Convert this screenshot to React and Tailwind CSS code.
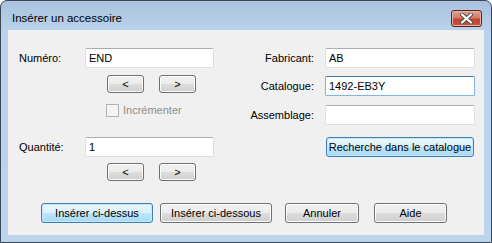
import React from 'react';

const font = "font-['Liberation_Sans',Arial,sans-serif]";

function Input({ value, focused, className = '' }) {
  const border = focused
    ? 'border-[#7eb4ea] border-t-[#3d7bad]'
    : 'border-[#dbdfe6] border-t-[#abadb3]';
  return (
    <div className={`h-[20px] bg-white border rounded-[2px] flex items-center pl-[3px] text-[11px] text-black ${border} ${className}`}>
      {value}
    </div>
  );
}

function Btn({ children, primary, className = '' }) {
  const look = primary
    ? 'border-[#3c7fb1] bg-[linear-gradient(#eaf6fd,#d9f0fc_50%,#bee6fd_50%,#a7d9f5)] shadow-[inset_0_0_0_1px_#c6e7fa]'
    : 'border-[#707070] bg-[linear-gradient(#f2f2f2,#ebebeb_50%,#dddddd_50%,#cfcfcf)] shadow-[inset_0_0_0_1px_#fcfcfc]';
  return (
    <div className={`border rounded-[3px] flex items-center justify-center text-[11px] text-black ${look} ${className}`}>
      {children}
    </div>
  );
}

export default function App() {
  return (
    <div className={`w-[492px] h-[243px] ${font}`}>
      <div className="w-full h-full flex flex-col border border-[#3b4756] rounded-t-[7px] bg-[linear-gradient(#a9c2de,#bad2eb_30px,#bcd4ec)]">
        {/* barre de titre */}
        <div className="h-[29px] flex items-center pt-[7px] pl-[11px] pr-[9px]">
          <span className="text-[11.5px] text-black flex-1">Insérer un accessoire</span>
          <div className="w-[31px] h-[17px] -mt-[1px] rounded-[3px] border border-[#5e2318] bg-[linear-gradient(#e4a394,#d47b69_45%,#c2432f_55%,#c8553e)] shadow-[inset_0_0_0_1px_#eab0a4] flex items-center justify-center">
            <svg width="13" height="11" viewBox="0 0 13 11">
              <path d="M2 1.5 L11 9.5 M11 1.5 L2 9.5" stroke="#4a4a4a" strokeWidth="4" strokeLinecap="round" />
              <path d="M2 1.5 L11 9.5 M11 1.5 L2 9.5" stroke="#ffffff" strokeWidth="2.2" strokeLinecap="round" />
            </svg>
          </div>
        </div>

        {/* zone client */}
        <div className="flex-1 mx-[7px] mb-[7px] bg-[#f0f0f0] text-[11px] text-black">
          <div className="flex pt-[18px]">
            {/* colonne gauche */}
            <div className="w-[220px] pl-[11px] flex flex-col">
              <div className="flex items-center h-[20px]">
                <span className="w-[66px]">Numéro:</span>
                <Input value="END" className="w-[129px]" />
              </div>
              <div className="flex gap-[15px] pl-[88px] mt-[7px]">
                <Btn className="w-[37px] h-[18px]">&lt;</Btn>
                <Btn className="w-[37px] h-[18px]">&gt;</Btn>
              </div>
              <div className="flex items-center gap-[4px] pl-[87px] mt-[11px] h-[13px]">
                <div className="w-[13px] h-[13px] border border-[#b1b1b1] bg-[#f4f4f4]"></div>
                <span className="text-[#8d8d8d]">Incrémenter</span>
              </div>
              <div className="flex items-center h-[20px] mt-[20px]">
                <span className="w-[66px]">Quantité:</span>
                <Input value="1" className="w-[129px]" />
              </div>
              <div className="flex gap-[15px] pl-[88px] mt-[6px]">
                <Btn className="w-[37px] h-[18px]">&lt;</Btn>
                <Btn className="w-[37px] h-[18px]">&gt;</Btn>
              </div>
            </div>

            {/* colonne droite */}
            <div className="flex flex-col">
              <div className="flex items-center h-[20px]">
                <span className="w-[86px] text-right">Fabricant:</span>
                <Input value="AB" className="w-[150px] ml-[11px]" />
              </div>
              <div className="flex items-center h-[20px] mt-[8px]">
                <span className="w-[86px] text-right">Catalogue:</span>
                <Input value="1492-EB3Y" focused className="w-[150px] ml-[11px]" />
              </div>
              <div className="flex items-center h-[20px] mt-[9px]">
                <span className="w-[86px] text-right">Assemblage:</span>
                <Input value="" className="w-[150px] ml-[11px]" />
              </div>
              <div className="flex mt-[12px] pl-[98px]">
                <Btn primary className="w-[148px] h-[20px]">Recherche dans le catalogue</Btn>
              </div>
            </div>
          </div>

          {/* boutons du bas */}
          <div className="flex items-center pl-[33px] mt-[22px]">
            <Btn primary className="w-[112px] h-[20px]">Insérer ci-dessus</Btn>
            <Btn className="w-[112px] h-[20px] ml-[7px]">Insérer ci-dessous</Btn>
            <Btn className="w-[74px] h-[20px] ml-[13px]">Annuler</Btn>
            <Btn className="w-[73px] h-[20px] ml-[15px]">Aide</Btn>
          </div>
        </div>
      </div>
    </div>
  );
}
